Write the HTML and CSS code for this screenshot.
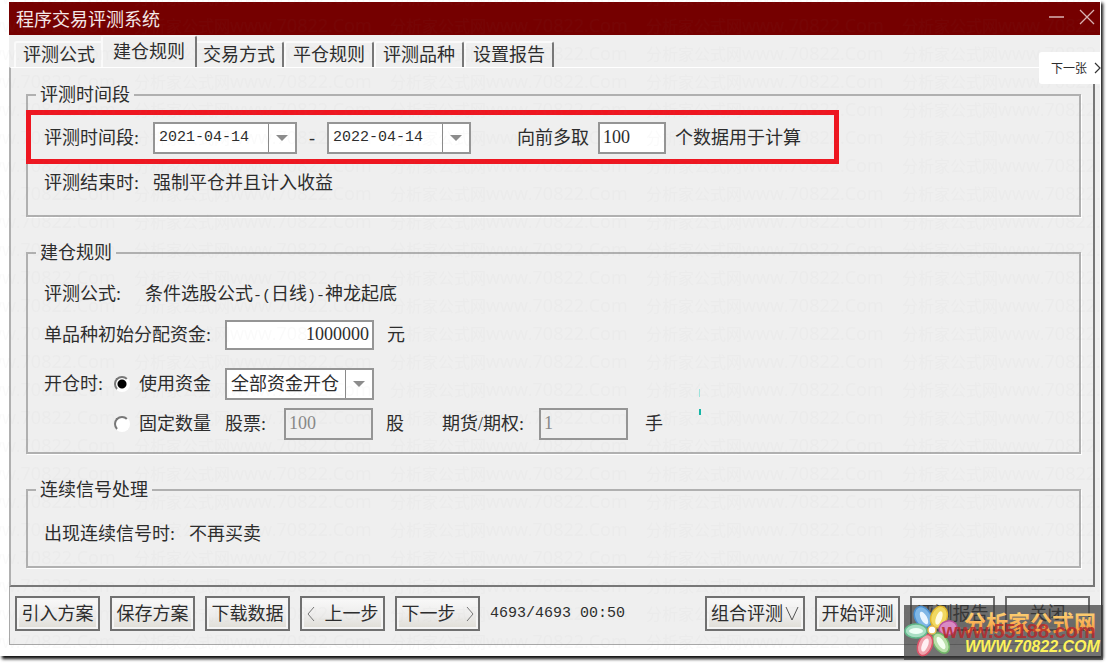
FILE: index.html
```html
<!DOCTYPE html>
<html lang="zh-CN">
<head>
<meta charset="utf-8">
<title>程序交易评测系统</title>
<link rel="stylesheet" href="styles.css">
</head>
<body>
<div class="frame">
  <main class="window">
    <header class="titlebar">
      <h1 class="title">程序交易评测系统</h1>
      <div class="window-controls">
        <button class="ctl" type="button" aria-label="最小化"><svg width="16" height="16" viewBox="0 0 16 16"><path d="M0 8H15" stroke="#d9b3b3" stroke-width="1.5"/></svg></button>
        <button class="ctl" type="button" aria-label="关闭窗口"><svg width="16" height="16" viewBox="0 0 16 16"><path d="M1 1L15 15M15 1L1 15" stroke="#d9b3b3" stroke-width="1.3"/></svg></button>
      </div>
    </header>

    <nav class="tabs" role="tablist">
      <button class="tab" type="button" role="tab">评测公式</button>
      <button class="tab tab-active" type="button" role="tab" aria-selected="true">建仓规则</button>
      <button class="tab" type="button" role="tab">交易方式</button>
      <button class="tab" type="button" role="tab">平仓规则</button>
      <button class="tab" type="button" role="tab">评测品种</button>
      <button class="tab" type="button" role="tab">设置报告</button>
    </nav>

    <form class="pane">
      <fieldset class="group group-period">
        <legend>评测时间段</legend>
        <div class="row">
          <label class="label-period" for="start">评测时间段:</label>
          <span class="combo combo-date"><select class="mono" id="start"><option>2021-04-14</option></select><span class="drop"><svg width="12" height="6" viewBox="0 0 12 6"><path d="M0 0H12L6 6Z" fill="#8c8c8c"/></svg></span></span>
          <span class="dash">-</span>
          <span class="combo combo-date"><select class="mono" id="end" aria-label="结束日期"><option>2022-04-14</option></select><span class="drop"><svg width="12" height="6" viewBox="0 0 12 6"><path d="M0 0H12L6 6Z" fill="#8c8c8c"/></svg></span></span>
          <label class="label-extra" for="extra">向前多取</label>
          <input class="field field-extra" id="extra" type="text" value="100">
          <span>个数据用于计算</span>
        </div>
        <div class="row">
          <span class="label-period">评测结束时:</span>
          <span>强制平仓并且计入收益</span>
        </div>
        <div class="highlight"></div>
      </fieldset>

      <fieldset class="group group-rules">
        <legend>建仓规则</legend>
        <div class="row">
          <span class="label-formula">评测公式:</span>
          <span>条件选股公式<span class="mono">-(</span>日线<span class="mono">)-</span>神龙起底</span>
        </div>
        <div class="row row-fund">
          <label class="label-fund" for="fund">单品种初始分配资金:</label>
          <input class="field field-fund" id="fund" type="text" value="1000000">
          <span class="unit">元</span>
        </div>
        <div class="options">
          <span>开仓时:</span>
          <input class="radio" type="radio" name="mode" id="mode-fund" checked>
          <label for="mode-fund">使用资金</label>
          <span class="combo combo-mode"><select aria-label="资金方式"><option>全部资金开仓</option></select><span class="drop"><svg width="12" height="6" viewBox="0 0 12 6"><path d="M0 0H12L6 6Z" fill="#8c8c8c"/></svg></span></span>
          <input class="radio radio-fixed" type="radio" name="mode" id="mode-fixed">
          <label for="mode-fixed">固定数量</label>
          <div class="row">
            <label class="label-stock" for="stock">股票:</label>
            <input class="field field-count" id="stock" type="text" value="100" disabled>
            <span class="unit">股</span>
            <label class="label-future" for="future">期货/期权:</label>
            <input class="field field-count" id="future" type="text" value="1" disabled>
            <span class="unit unit-hand">手</span>
          </div>
        </div>
      </fieldset>

      <fieldset class="group group-signal">
        <legend>连续信号处理</legend>
        <div class="row">
          <span class="label-signal">出现连续信号时:</span>
          <span>不再买卖</span>
        </div>
      </fieldset>
    </form>

    <footer class="actions">
      <button class="btn" type="button">引入方案</button>
      <button class="btn" type="button">保存方案</button>
      <button class="btn" type="button">下载数据</button>
      <button class="btn btn-step" type="button"><svg width="8" height="16" viewBox="0 0 8 16"><path d="M7 1L1 8L7 15" fill="none" stroke="#777"/></svg>上一步</button>
      <button class="btn btn-step" type="button">下一步<svg width="8" height="16" viewBox="0 0 8 16"><path d="M1 1L7 8L1 15" fill="none" stroke="#777"/></svg></button>
      <output class="status mono">4693/4693 00:50</output>
      <button class="btn btn-combo" type="button">组合评测<svg width="14" height="14" viewBox="0 0 14 14"><path d="M1 0L7 13L13 0" fill="none" stroke="#555"/></svg></button>
      <button class="btn" type="button">开始评测</button>
      <button class="btn" type="button">评测报告</button>
      <button class="btn" type="button">关闭</button>
    </footer>
  </main>

  <svg class="watermark" width="100%" height="100%" aria-hidden="true">
    <defs>
      <pattern id="mark" x="134" y="12" width="256" height="28" patternUnits="userSpaceOnUse">
        <text class="mark-cn" x="0" y="20">分析家公式网</text>
        <text class="mark-url" x="96" y="20">www.70822.Com</text>
      </pattern>
    </defs>
    <rect width="100%" height="100%" fill="url(#mark)"/>
    <rect x="699" y="389" width="1" height="8" fill="#9fe3dc"/>
    <rect x="699" y="409" width="2" height="6" fill="#16b5a6"/>
  </svg>

  <button class="next" type="button">下一张<svg width="7" height="12" viewBox="0 0 7 12"><path d="M1 1L6 6L1 11" fill="none" stroke="#333" stroke-width="1.200"/></svg></button>

  <div class="brand">
    <svg width="199" height="55" viewBox="0 0 199 55">
      <defs>
        <linearGradient id="gold" x1="0" y1="0" x2="0" y2="1">
          <stop offset="0" stop-color="#ffe68a"/>
          <stop offset="1" stop-color="#f58a2c"/>
        </linearGradient>
      </defs>
      <g stroke-width="1.500">
        <ellipse cx="19" cy="12" rx="8" ry="11" fill="#7fb7e6" stroke="#4b90d0" transform="rotate(-28 19 12)"/>
        <ellipse cx="35" cy="12" rx="8" ry="11" fill="#f0d860" stroke="#e0b62c" transform="rotate(20 35 12)"/>
        <ellipse cx="44" cy="23" rx="9" ry="7" fill="#d98ac4" stroke="#b94f9c" transform="rotate(-15 44 23)"/>
        <ellipse cx="37" cy="38" rx="7" ry="11" fill="#b9dfa9" stroke="#70b667" transform="rotate(-32 37 38)"/>
        <ellipse cx="21" cy="40" rx="7" ry="11" fill="#efa3ac" stroke="#dc5268" transform="rotate(22 21 40)"/>
        <ellipse cx="12" cy="26" rx="11" ry="7" fill="#a9dfc4" stroke="#62b98b"/>
        <ellipse cx="20" cy="13" rx="3" ry="7" fill="#e9f5ff" stroke="none" transform="rotate(-28 20 13)"/>
        <ellipse cx="35" cy="13" rx="3" ry="7" fill="#fffbe0" stroke="none" transform="rotate(20 35 13)"/>
        <ellipse cx="37" cy="38" rx="3" ry="7" fill="#f4fff0" stroke="none" transform="rotate(-32 37 38)"/>
        <ellipse cx="21" cy="40" rx="3" ry="7" fill="#fff0f2" stroke="none" transform="rotate(22 21 40)"/>
        <ellipse cx="12" cy="26" rx="7" ry="3" fill="#effff6" stroke="none"/>
        <circle cx="28" cy="25" r="4" fill="#fff" stroke="#e9bd51"/>
      </g>
      <text class="brand-cn" x="60" y="26">分析家公式网</text>
      <text class="brand-red" x="38" y="33">www.55188.com</text>
      <text class="brand-url" x="61" y="47">WWW.70822.COM</text>
    </svg>
  </div>
</div>
</body>
</html>
```
FILE: styles.css
```css
* { box-sizing: border-box; }

body {
  min-height: 100vh;
  margin: 0;
  background: #fff;
  color: #2c2c2c;
  font: 18px/24px "Liberation Serif", "Noto Sans CJK SC", serif;
}

button, input, select {
  margin: 0;
  color: inherit;
  font: inherit;
}

.frame {
  position: relative;
  margin-right: 8px;
  padding: 2px 1px 11px 9px;
  background: #fff;
  box-shadow: 2px 3px 3px #111;
}

.window {
  background: #efefef;
  border-bottom: 1px solid #a8a8a8;
}

.titlebar {
  display: flex;
  align-items: center;
  justify-content: space-between;
  height: 33px;
  padding: 0 5px 4px 7px;
  background: #750000;
  color: #f4e8e8;
}

.title {
  margin: 2px 0 0;
  font: 18px/24px "Noto Sans CJK SC", sans-serif;
}

.window-controls { display: flex; gap: 14px; }

.ctl {
  display: flex;
  padding: 0;
  border: 0;
  background: none;
}

.tabs {
  display: flex;
  align-items: flex-end;
  height: 32px;
  padding-left: 5px;
}

.tab {
  width: 90px;
  height: 26px;
  padding: 0;
  border: solid;
  border-width: 2px 2px 0;
  border-color: #fafafa #777 #777 #fafafa;
  border-radius: 3px 3px 0 0;
  background: #efefef;
}

.tab:first-child { border-right-color: #efefef; }

.tab-active {
  position: relative;
  width: 96px;
  height: 32px;
  margin: 0 -3px;
  border-top-color: #f4f4f4;
}

.pane {
  display: flex;
  flex-direction: column;
  gap: 26px;
  margin-right: 5px;
  padding: 17px 12px 17px 15px;
  border: solid;
  border-width: 1px 2px 2px;
  border-color: #fff #777 #777 #b0b0b0;
}

.group {
  position: relative;
  display: flex;
  flex-direction: column;
  min-width: 0;
  margin: 0;
  border: 2px solid #b0b0b0;
  box-shadow: 1px 1px #fff;
}

.group legend {
  margin-left: -8px;
  padding: 0 4px;
  line-height: 20px;
}

.group-period { gap: 17px; padding: 17px 16px 20px; }
.group-rules { padding: 19px 16px 12px; }
.group-signal { padding: 22px 16px 20px; }

.row {
  display: flex;
  align-items: center;
  gap: 9px;
  white-space: nowrap;
}

.row-fund { margin: 14px 0 18px; }

.label-period { min-width: 100px; }
.label-formula { min-width: 92px; }
.label-fund { min-width: 172px; }
.label-extra { margin-left: 37px; }
.label-signal { min-width: 136px; }
.label-stock { min-width: 50px; }
.label-future { min-width: 88px; margin-left: 29px; }
.unit { margin-left: 4px; }
.unit-hand { margin-left: 8px; }
.dash { width: 12px; text-align: center; }

.highlight {
  position: absolute;
  top: 5px;
  left: -2px;
  width: 813px;
  height: 54px;
  border: 5px solid #ee1620;
  pointer-events: none;
}

.mono {
  font-family: "Liberation Mono", monospace;
  font-size: 15px;
  line-height: 16px;
}

.combo {
  position: relative;
  display: block;
  height: 32px;
}

.combo-date { width: 144px; }
.combo-mode { width: 149px; }

.combo select {
  width: 100%;
  height: 100%;
  padding: 0 30px 0 4px;
  border: 2px solid #959595;
  border-radius: 0;
  background: #fff;
  appearance: none;
}

.drop {
  position: absolute;
  inset: 2px 2px 2px auto;
  display: flex;
  align-items: center;
  justify-content: center;
  width: 27px;
  border-left: 1px solid #8a8a8a;
  pointer-events: none;
}

.field {
  height: 32px;
  padding: 0 3px 2px;
  border: 2px solid #959595;
  border-radius: 0;
  background: #fff;
}

.field:disabled { background: #efefef; color: #888; }
.field-extra { width: 68px; }
.field-fund { width: 149px; height: 30px; text-align: right; }
.field-count { width: 89px; }

.options {
  display: grid;
  grid-template-columns: 61px 16px 77px 1fr;
  gap: 8px 9px;
  align-items: center;
  white-space: nowrap;
}

.radio {
  width: 16px;
  height: 16px;
  border: 2px solid;
  border-color: #777 #fff #fff #777;
  border-radius: 50%;
  background: #fff;
  appearance: none;
}

.radio:checked { background: radial-gradient(circle, #000 4px, #fff 5px); }
.radio-fixed { grid-column: 2; }

.actions {
  display: flex;
  align-items: center;
  gap: 10px;
  padding: 9px 10px 13px 5px;
  border-left: 1px solid #a8a8a8;
}

.btn {
  flex: none;
  display: flex;
  align-items: center;
  justify-content: center;
  width: 85px;
  height: 35px;
  padding: 0;
  border: 2px solid #707070;
  background: linear-gradient(#f9f9f9, #ecebea 60%, #dfddd5);
  box-shadow: inset 0 0 0 2px #f4f4f4;
  white-space: nowrap;
}

.btn-step { gap: 10px; }
.btn-combo { width: 100px; gap: 2px; }
.status { flex: 1; }

.watermark {
  position: absolute;
  inset: 0;
  pointer-events: none;
}

.mark-cn, .mark-url { fill: #808080; fill-opacity: 0.04; }
.mark-cn { font: 16px "Noto Sans CJK SC", sans-serif; }
.mark-url { font: 18px "Open Sans", sans-serif; }

.next {
  position: absolute;
  top: 52px;
  right: 0;
  display: flex;
  align-items: center;
  gap: 7px;
  height: 32px;
  padding: 0 0 0 12px;
  border: 0;
  border-radius: 3px 0 0 3px;
  background: #fff;
  font: 12px/18px "Noto Sans CJK SC", sans-serif;
}

.brand {
  position: absolute;
  right: -2px;
  bottom: -4px;
  display: flex;
  background: rgba(60, 60, 60, 0.72);
}

.brand-cn {
  fill: url(#gold);
  font: bold 22px "Noto Sans CJK SC", sans-serif;
}

.brand-red {
  fill: #b5292c;
  fill-opacity: 0.85;
  font: bold 20px "Liberation Sans", sans-serif;
}

.brand-url {
  fill: #fdf25a;
  font: italic bold 16px "Liberation Sans", sans-serif;
}
```
